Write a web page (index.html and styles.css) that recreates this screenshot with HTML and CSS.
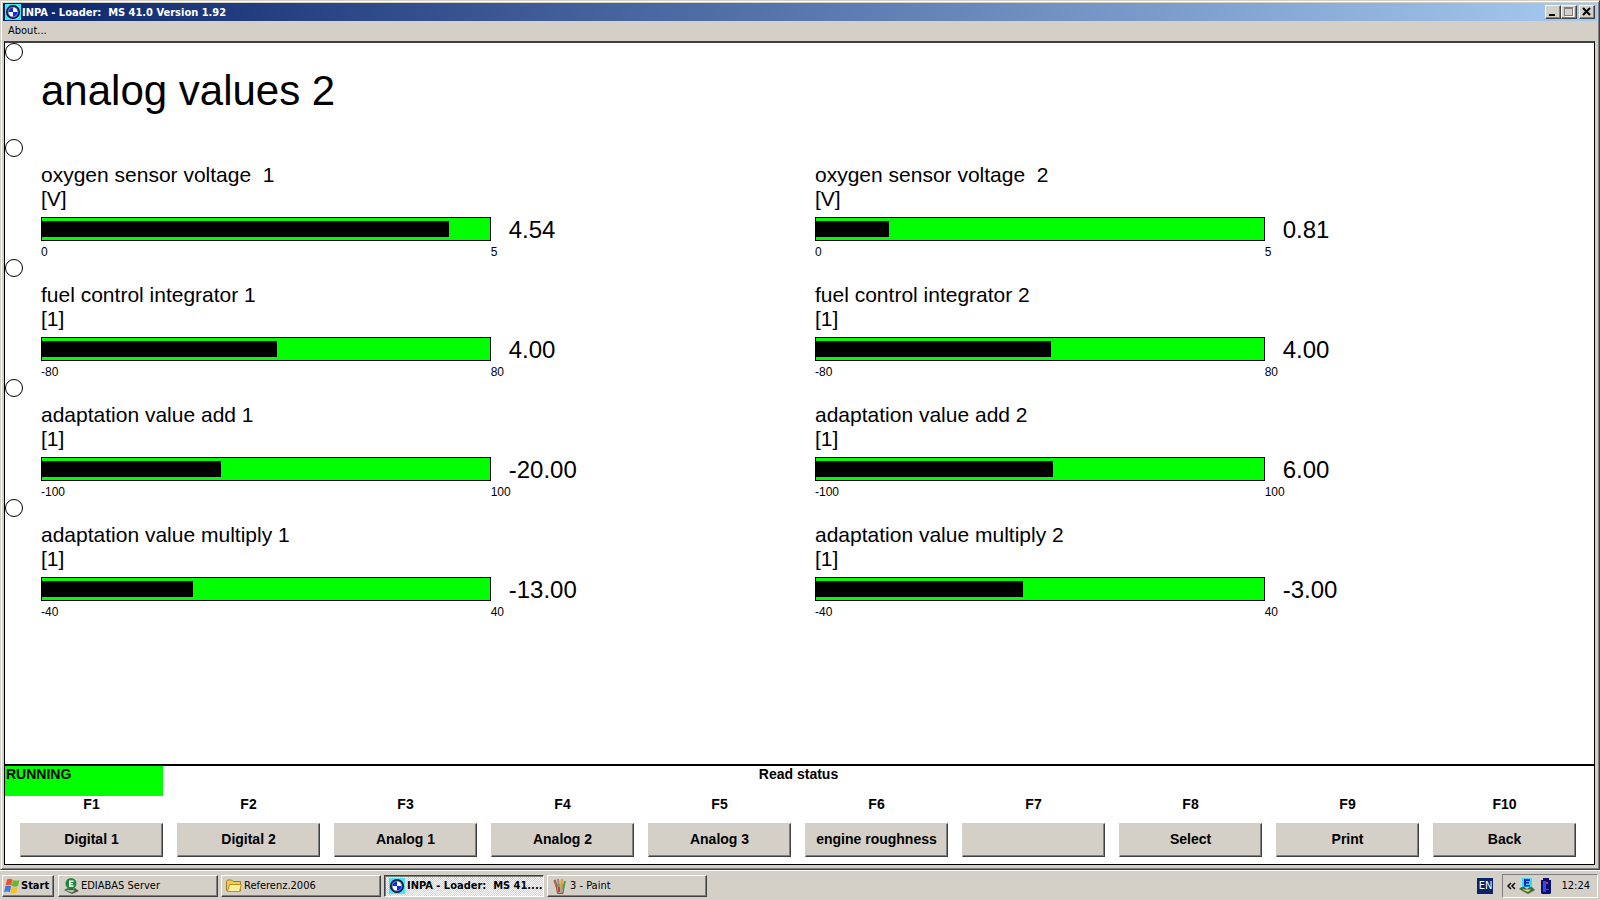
FILE: index.html
```
<!DOCTYPE html>
<html lang="en">
<head>
    <meta charset="UTF-8">
    <meta name="viewport" content="width=device-width, initial-scale=1.0">
    <title>INPA - Loader: MS 41.0 Version 1.92</title>
    <link rel="stylesheet" href="styles.css">
</head>
<body>
    <svg width="0" height="0" class="defs">
        <symbol id="roundel" viewBox="0 0 16 16">
            <rect width="16" height="16" fill="#3fe8f4"/>
            <circle cx="8" cy="8" r="7" fill="#0a1030"/>
            <circle cx="8" cy="8" r="5.500" fill="#5a6aa8"/>
            <circle cx="8" cy="8" r="4.500" fill="#fff"/>
            <path d="M8 8V3.500A4.500 4.500 0 0 0 3.500 8zM8 8v4.500A4.500 4.500 0 0 0 12.500 8z" fill="#0a2cf0"/>
        </symbol>
    </svg>

    <div class="window">
        <div class="titlebar">
            <svg class="icon"><use href="#roundel"/></svg>
            <span class="title">INPA - Loader:&nbsp; MS 41.0 Version 1.92</span>
            <div class="controls">
                <button class="ctl" aria-label="Minimize"><svg width="12" height="10"><path d="M2 7h6v2H2z"/></svg></button>
                <button class="ctl" aria-label="Maximize" disabled><svg width="12" height="10"><path d="M2 1h9v9H2z" fill="#fff"/><path d="M1 0h9v9H1zM2 2v6h7V2z" fill="#808080" fill-rule="evenodd"/><path d="M2 2h7v6H2z" fill="#d4d0c8"/></svg></button>
                <button class="ctl close" aria-label="Close"><svg width="12" height="10"><path d="M2 1l7 7M9 1L2 8" stroke="#000" stroke-width="2"/></svg></button>
            </div>
        </div>
        <div class="menubar"><a href="#">About...</a></div>

        <div class="client">
            <main class="screen">
                <div class="line head">
                    <span class="hole"></span>
                    <h1>analog values 2</h1>
                </div>
                <div class="line">
                    <span class="hole"></span>
                    <div class="gauge">
                        <div class="name">oxygen sensor voltage&nbsp; 1<br>[V]</div>
                        <div class="row"><div class="bar"><div class="fill" style="width: 90.8%"></div></div><span class="value">4.54</span></div>
                        <div class="scale"><span>0</span><span>5</span></div>
                    </div>
                    <div class="gauge">
                        <div class="name">oxygen sensor voltage&nbsp; 2<br>[V]</div>
                        <div class="row"><div class="bar"><div class="fill" style="width: 16.2%"></div></div><span class="value">0.81</span></div>
                        <div class="scale"><span>0</span><span>5</span></div>
                    </div>
                </div>
                <div class="line">
                    <span class="hole"></span>
                    <div class="gauge">
                        <div class="name">fuel control integrator 1<br>[1]</div>
                        <div class="row"><div class="bar"><div class="fill" style="width: 52.5%"></div></div><span class="value">4.00</span></div>
                        <div class="scale"><span>-80</span><span>80</span></div>
                    </div>
                    <div class="gauge">
                        <div class="name">fuel control integrator 2<br>[1]</div>
                        <div class="row"><div class="bar"><div class="fill" style="width: 52.5%"></div></div><span class="value">4.00</span></div>
                        <div class="scale"><span>-80</span><span>80</span></div>
                    </div>
                </div>
                <div class="line">
                    <span class="hole"></span>
                    <div class="gauge">
                        <div class="name">adaptation value add 1<br>[1]</div>
                        <div class="row"><div class="bar"><div class="fill" style="width: 40%"></div></div><span class="value">-20.00</span></div>
                        <div class="scale"><span>-100</span><span>100</span></div>
                    </div>
                    <div class="gauge">
                        <div class="name">adaptation value add 2<br>[1]</div>
                        <div class="row"><div class="bar"><div class="fill" style="width: 53%"></div></div><span class="value">6.00</span></div>
                        <div class="scale"><span>-100</span><span>100</span></div>
                    </div>
                </div>
                <div class="line">
                    <span class="hole"></span>
                    <div class="gauge">
                        <div class="name">adaptation value multiply 1<br>[1]</div>
                        <div class="row"><div class="bar"><div class="fill" style="width: 33.75%"></div></div><span class="value">-13.00</span></div>
                        <div class="scale"><span>-40</span><span>40</span></div>
                    </div>
                    <div class="gauge">
                        <div class="name">adaptation value multiply 2<br>[1]</div>
                        <div class="row"><div class="bar"><div class="fill" style="width: 46.25%"></div></div><span class="value">-3.00</span></div>
                        <div class="scale"><span>-40</span><span>40</span></div>
                    </div>
                </div>
            </main>

            <div class="panel">
                <div class="status">
                    <div class="running">RUNNING</div>
                    <div class="message">Read status</div>
                </div>
                <div class="keys">
                    <div class="key"><label for="f1">F1</label><button id="f1">Digital 1</button></div>
                    <div class="key"><label for="f2">F2</label><button id="f2">Digital 2</button></div>
                    <div class="key"><label for="f3">F3</label><button id="f3">Analog 1</button></div>
                    <div class="key"><label for="f4">F4</label><button id="f4">Analog 2</button></div>
                    <div class="key"><label for="f5">F5</label><button id="f5">Analog 3</button></div>
                    <div class="key"><label for="f6">F6</label><button id="f6">engine roughness</button></div>
                    <div class="key"><label for="f7">F7</label><button id="f7"></button></div>
                    <div class="key"><label for="f8">F8</label><button id="f8">Select</button></div>
                    <div class="key"><label for="f9">F9</label><button id="f9">Print</button></div>
                    <div class="key"><label for="f10">F10</label><button id="f10">Back</button></div>
                </div>
            </div>
        </div>
    </div>

    <div class="taskbar">
        <button class="start">
            <svg class="icon" viewBox="0 0 16 16">
                <path d="M3 1.500q2.500-1.500 5.500 0L7.300 7.500q-3-1.500-5.800 0z" fill="#e8562a"/>
                <path d="M9 2q3 1.500 6.500 0L14 8q-3 1.500-6.200 0z" fill="#6db52c"/>
                <path d="M1.400 8.200q2.500-1.500 5.700 0L5.900 14.300q-3-1.500-5.800 0z" fill="#3f7ae0"/>
                <path d="M7.600 8.700q3 1.500 6.200 0l-1.400 6q-3 1.500-6.100 0z" fill="#f3c22b"/>
            </svg>
            Start
        </button>
        <button class="task">
            <svg class="icon" viewBox="0 0 16 16">
                <path d="M1 12l4-2 3 2 4-2 4 3-7 3z" fill="#4d5a4d"/>
                <path d="M3 12.500l4-1 5 1-3 2z" fill="#b8c8b0"/>
                <path d="M6 9h4v3H6z" fill="#176b2c"/>
                <circle cx="8" cy="5.500" r="5.500" fill="#1f8a3c"/>
                <path d="M6 2.500h4.500V4H7.700v1h2.300v1.300H7.700v1h2.800v1.500H6z" fill="#fff"/>
            </svg>
            EDIABAS Server
        </button>
        <button class="task">
            <svg class="icon" viewBox="0 0 16 16">
                <path d="M.5 3.500l1-1.500h4l1.500 1.500h7.500V13l-1 .5H1.500L.5 12z" fill="#f2cc50" stroke="#a57c1b"/>
                <path d="M3.500 6.500h11.800L13.500 13.500H1.500z" fill="#fdee9c" stroke="#b98f27"/>
            </svg>
            Referenz.2006
        </button>
        <button class="task active">
            <svg class="icon"><use href="#roundel"/></svg>
            INPA - Loader:&nbsp; MS 41....
        </button>
        <button class="task">
            <svg class="icon" viewBox="0 0 16 16">
                <path d="M4 7h8l-1 8.500H5.500z" fill="#b9a28c" stroke="#6c5a50"/>
                <path d="M5 9L2.500 2" stroke="#b0683c" stroke-width="2.500"/>
                <path d="M7 9L6 1" stroke="#8a8f98" stroke-width="2"/>
                <path d="M9 10l1-9" stroke="#e0a63a" stroke-width="2.500"/>
                <path d="M11 11l2-8" stroke="#4e9e50" stroke-width="2"/>
                <path d="M7 14V9" stroke="#cc4038" stroke-width="2"/>
            </svg>
            3 - Paint
        </button>
        <div class="lang">EN</div>
        <div class="tray">
            <svg width="9" height="8" viewBox="0 0 9 8"><path d="M4 1L1 4l3 3M8 1L5 4l3 3" fill="none" stroke="#000" stroke-width="1.500"/></svg>
            <svg class="icon" viewBox="0 0 16 16">
                <path d="M0 11l4-3 4 3 4-3 4 4-7 4z" fill="#3f6b3c"/>
                <path d="M3 11.500h9l-3 2.500z" fill="#d8e070"/>
                <path d="M3 0h10v9H3z" fill="#30e0f0"/>
                <path d="M5 1h6v2H7v1h3v1.500H7V7h4v1.500H5z" fill="#1020d0"/>
            </svg>
            <svg class="icon" viewBox="0 0 16 16">
                <path d="M5 0h6v2h2v13l-1 1H4l-1-1V2h2z" fill="#0c0c70"/>
                <path d="M5 3h3v11H5z" fill="#3048e8"/>
                <path d="M8 4h2v2H8zM8 11h3v1H8z" fill="#e02050"/>
            </svg>
            <span class="clock">12:24</span>
        </div>
    </div>
</body>
</html>
```
FILE: styles.css
```
* {
    box-sizing: border-box;
}
body {
    margin: 0;
    min-height: 100vh;
    display: flex;
    flex-direction: column;
    background-color: #d4d0c8;
    color: #000;
    font-family: "DejaVu Sans Condensed", "DejaVu Sans", sans-serif;
    font-size: 11px;
}
button {
    font: inherit;
    color: inherit;
    background-color: #d4d0c8;
    border: 1px solid;
    border-color: #fff #404040 #404040 #fff;
    box-shadow: inset -1px -1px #808080;
    padding: 0;
}
.defs {
    position: absolute;
}
.icon {
    width: 16px;
    height: 16px;
    flex: none;
}

/* window frame */
.window {
    flex: 1;
    display: flex;
    flex-direction: column;
    padding: 2px;
    border: 1px solid;
    border-color: #d4d0c8 #404040 #404040 #d4d0c8;
    box-shadow: inset 1px 1px #fff, inset -1px -1px #808080;
}
.titlebar {
    display: flex;
    align-items: center;
    height: 18px;
    padding: 0 2px;
    background: linear-gradient(to right, #0a246a, #a6caf0);
    color: #fff;
    font-weight: bold;
}
.title {
    flex: 1;
    padding-left: 1px;
}
.controls {
    display: flex;
}
.ctl {
    width: 16px;
    height: 14px;
    display: flex;
    align-items: center;
    justify-content: center;
}
.close {
    margin-left: 2px;
}
.menubar {
    height: 20px;
    padding: 0 5px;
    line-height: 20px;
}
.menubar a {
    color: #000;
    text-decoration: none;
}

/* client area */
.client {
    flex: 1;
    display: flex;
    flex-direction: column;
    margin: 0 2px 2px 1px;
    border: 1px solid #000;
    border-top: 2px solid #404040;
    background-color: #fff;
}
.screen {
    flex: 1;
    padding-right: 5px;
    font-family: "Liberation Sans", Arial, sans-serif;
}
.line {
    display: grid;
    grid-template-columns: 36px 1fr 1fr;
    height: 120px;
}
.head {
    height: 96px;
}
.hole {
    width: 18px;
    height: 18px;
    border: 1px solid #000;
    border-radius: 50%;
}
h1 {
    margin: 0;
    padding-top: 24px;
    font-size: 42px;
    font-weight: normal;
    line-height: 48px;
    white-space: nowrap;
}
.gauge {
    padding-top: 24px;
}
.name {
    font-size: 21px;
    line-height: 24px;
}
.row {
    display: flex;
    align-items: center;
    gap: 18px;
    height: 24px;
    margin-top: 6px;
}
.bar {
    width: 58.1%;
    height: 24px;
    padding: 3px 0;
    border: 1px solid #000;
    background-color: #00ff00;
}
.fill {
    height: 16px;
    background-color: #000;
}
.value {
    font-size: 24px;
    line-height: 26px;
    padding-top: 2px;
}
.scale {
    display: flex;
    font-size: 12px;
    line-height: 22px;
}
.scale span:first-child {
    width: 58.1%;
}

/* function keys */
.panel {
    border-top: 2px solid #000;
    font-family: "Liberation Sans", Arial, sans-serif;
    font-size: 14px;
    font-weight: bold;
}
.status {
    display: grid;
    grid-template-columns: 158px 1fr 160px;
    line-height: 16px;
}
.running {
    height: 30px;
    padding-left: 1px;
    background-color: #00ff00;
}
.message {
    text-align: center;
}
.keys {
    display: grid;
    grid-template-columns: repeat(10, 1fr);
    gap: 14px;
    padding: 0 18px 7px 15px;
}
.key {
    display: flex;
    flex-direction: column;
    gap: 11px;
    text-align: center;
    line-height: 16px;
}
.key button {
    height: 34px;
    padding-bottom: 2px;
    border-color: #d4d0c8 #404040 #404040 #d4d0c8;
}

/* taskbar */
.taskbar {
    display: flex;
    align-items: center;
    height: 30px;
    padding: 0 2px;
    border-top: 1px solid #fff;
}
.start, .task {
    display: flex;
    align-items: center;
    height: 22px;
    gap: 2px;
    white-space: nowrap;
    overflow: hidden;
}
.start {
    width: 52px;
    padding-left: 1px;
    margin-right: 4px;
    gap: 1px;
    font-weight: bold;
}
.task {
    width: 160px;
    margin-right: 3px;
    padding-left: 4px;
}
.active {
    font-weight: bold;
    border-color: #404040 #fff #fff #404040;
    box-shadow: inset 1px 1px #808080;
    background: repeating-conic-gradient(#fff 0 25%, #d4d0c8 0 50%) 0 0 / 2px 2px;
}
.lang {
    width: 16px;
    margin-left: auto;
    background-color: #0a246a;
    color: #fff;
    line-height: 16px;
    text-align: center;
}
.tray {
    display: flex;
    align-items: center;
    gap: 3px;
    height: 24px;
    margin-left: 9px;
    padding: 0 7px 0 4px;
    border: 1px solid;
    border-color: #808080 #fff #fff #808080;
}
.clock {
    margin-left: 4px;
}
```
